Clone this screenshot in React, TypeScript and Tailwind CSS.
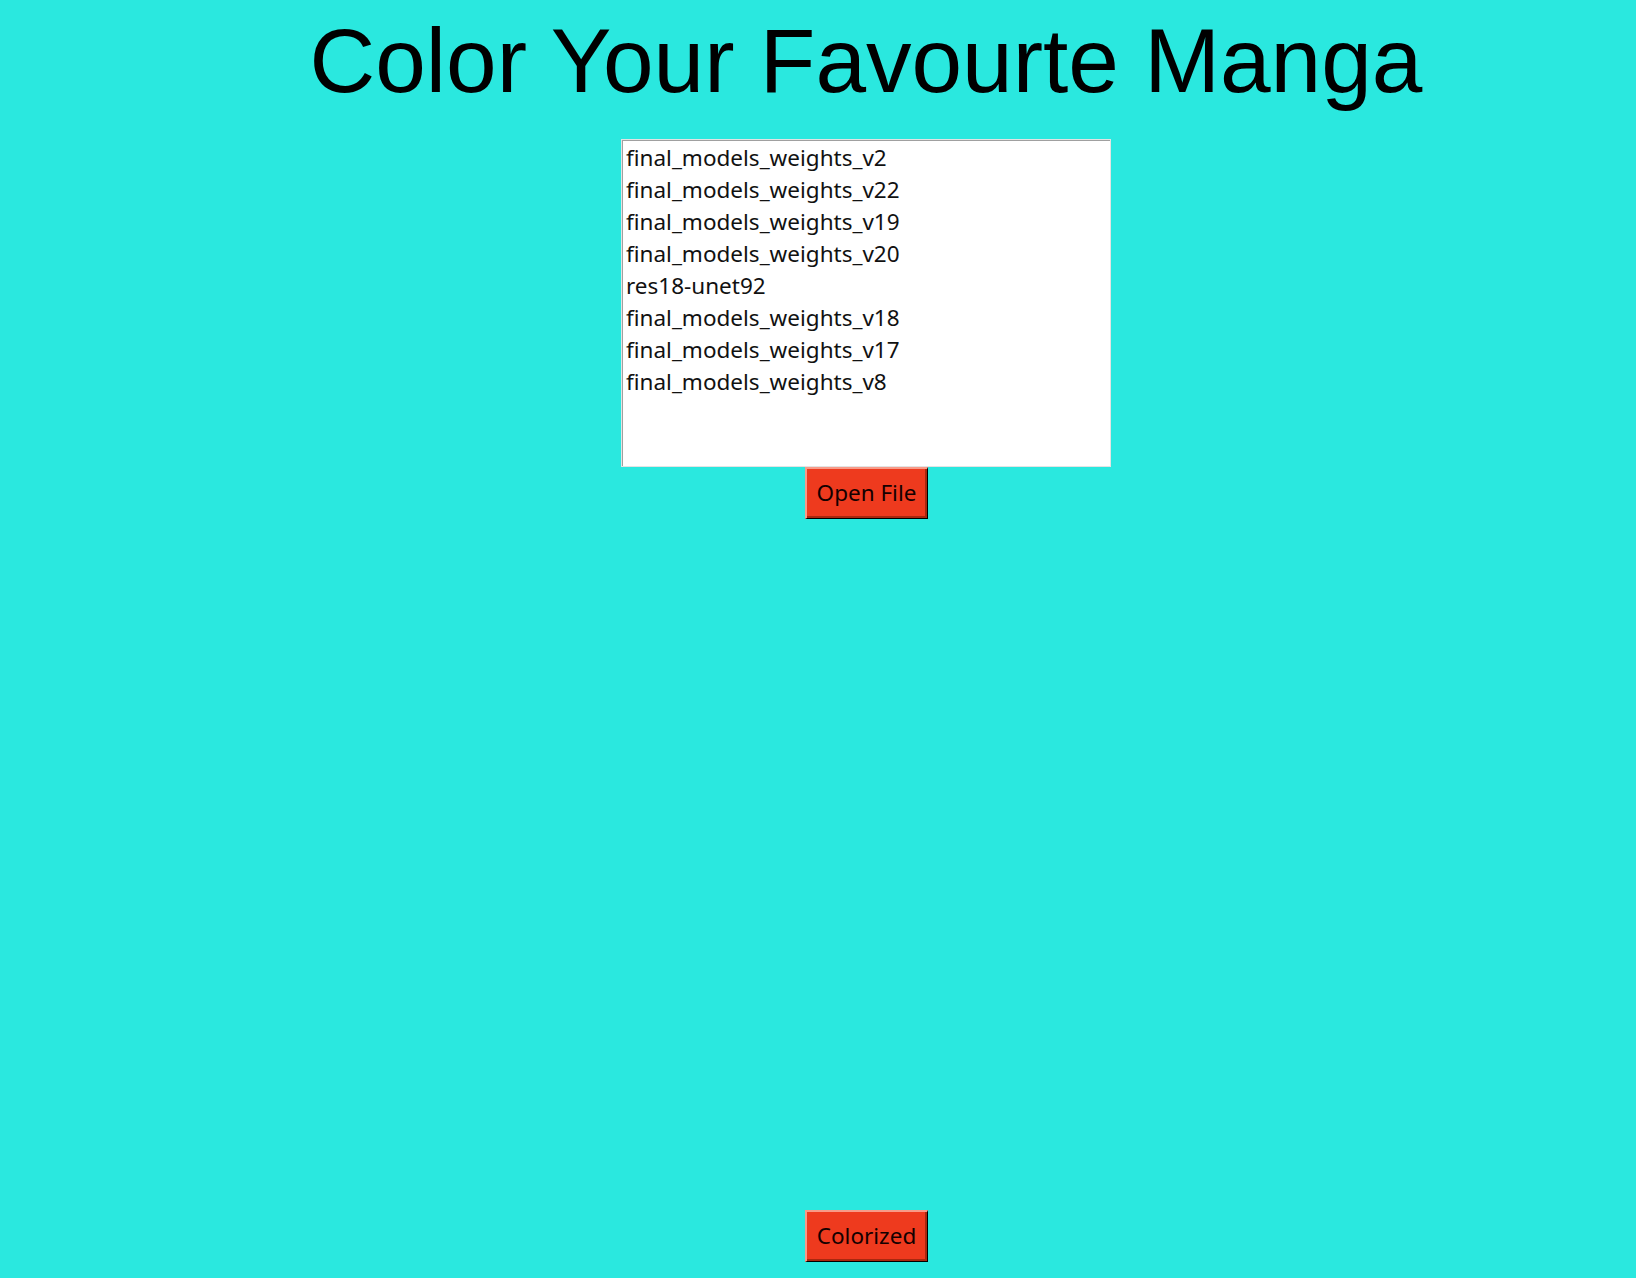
import React from 'react';

const models = [
  'final_models_weights_v2',
  'final_models_weights_v22',
  'final_models_weights_v19',
  'final_models_weights_v20',
  'res18-unet92',
  'final_models_weights_v18',
  'final_models_weights_v17',
  'final_models_weights_v8',
];

const TkButton = ({ label }: { label: string }) => (
  <button className="w-[123px] h-[52px] bg-[#ee3a1e] border-t-2 border-l-2 border-r border-b border-t-[#f89a88] border-l-[#f89a88] border-r-black border-b-black shadow-[inset_-2px_-2px_0_#a8280f] text-[22.5px] leading-none text-[#140000] font-['Noto_Sans',sans-serif] flex items-center justify-center">
    {label}
  </button>
);

const App = () => {
  return (
    <div className="h-[1278px] bg-[#2ae8df] flex flex-col items-center pl-[96px] overflow-hidden">
      <h1 className="mt-[11px] text-[91px] leading-[100px] text-black font-['Liberation_Sans',Arial,sans-serif] whitespace-nowrap">
        Color Your Favourte Manga
      </h1>
      <div className="mt-[28px] w-[490px] h-[328px] border border-[#e3e3e3] bg-white">
        <div className="h-full border-t border-l border-[#a0a0a0] pl-[3px] pt-[1px] font-['Noto_Sans',sans-serif] text-[22.5px] text-[#111]">
          {models.map((m) => (
            <div key={m} className="h-[32px] leading-[32px]">
              {m}
            </div>
          ))}
        </div>
      </div>
      <TkButton label="Open File" />
      <div className="mt-auto mb-[16px]">
        <TkButton label="Colorized" />
      </div>
    </div>
  );
};

export default App;
